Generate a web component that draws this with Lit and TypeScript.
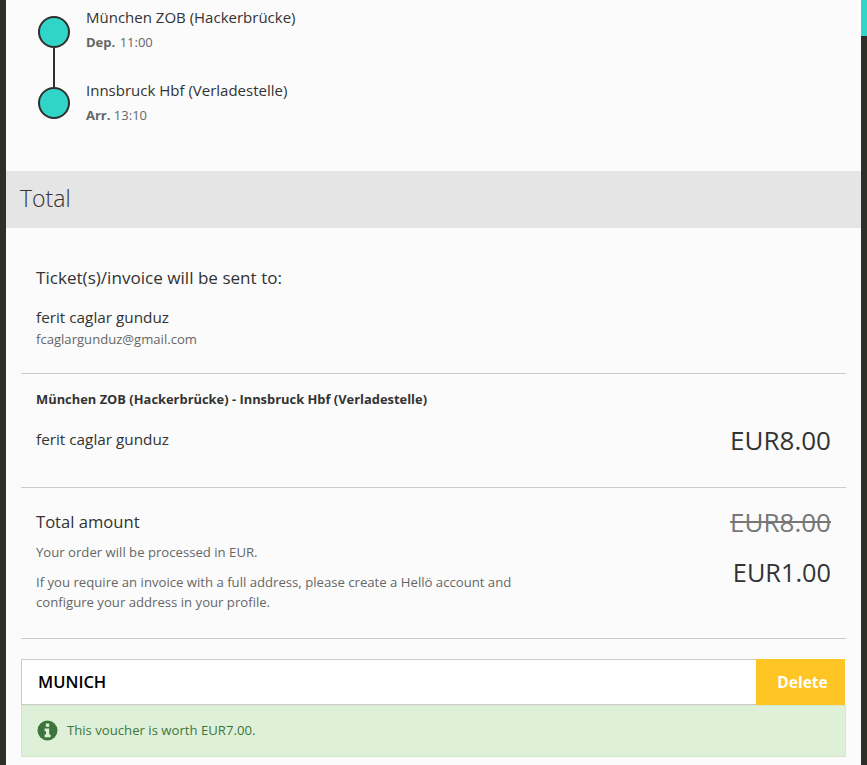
import { LitElement, html, css } from "lit";
import { customElement } from "lit/decorators.js";

@customElement("app-root")
export class AppRoot extends LitElement {
  static styles = css`
    :host {
      display: block;
      height: 765px;
      overflow: hidden;
      background: #2f2f2a;
      font-family: "Open Sans", "Noto Sans", sans-serif;
      color: #333;
    }
    .page {
      position: relative;
      height: 765px;
      margin: 0 6px;
      background: #fbfbfb;
      overflow: hidden;
    }
    .scroll {
      position: fixed;
      top: 0;
      right: 0;
      width: 6px;
      height: 36px;
      background: #30d5c8;
    }
    .route {
      height: 171px;
      box-sizing: border-box;
      padding: 4px 0 0 32px;
      display: flex;
      gap: 16px;
    }
    .line {
      display: flex;
      flex-direction: column;
      align-items: center;
      padding-top: 12px;
      width: 32px;
    }
    .dot {
      width: 32px;
      height: 32px;
      box-sizing: border-box;
      border: 2px solid #2f2f2f;
      border-radius: 50%;
      background: #30d5c8;
    }
    .bar {
      width: 2px;
      height: 39px;
      background: #2f2f2f;
    }
    .stop {
      height: 73px;
    }
    .name {
      font-size: 15px;
      line-height: 26px;
    }
    .time {
      font-size: 13px;
      line-height: 24px;
      color: #666;
    }
    .time b {
      font-weight: 700;
    }
    .time b.wide {
      margin-right: 1px;
    }
    .head {
      height: 57px;
      background: #e5e5e5;
      padding-left: 14px;
      font-size: 23px;
      line-height: 55px;
      font-weight: 300;
    }
    .body {
      padding: 0 15px;
    }
    .send {
      height: 146px;
      box-sizing: border-box;
      padding: 37px 15px 0;
      border-bottom: 1px solid #ccc;
    }
    .send h3 {
      margin: 0;
      font-size: 17.1px;
      font-weight: 400;
      line-height: 26px;
    }
    .send .who {
      font-size: 15.3px;
      line-height: 22px;
      margin-top: 15px;
    }
    .send .mail {
      font-size: 13.1px;
      line-height: 20px;
      margin-top: 1px;
      color: #666;
    }
    .ticket {
      height: 114px;
      box-sizing: border-box;
      padding: 15px 15px 0;
      border-bottom: 1px solid #ccc;
    }
    .ticket .title {
      font-size: 12.9px;
      font-weight: 700;
      line-height: 20px;
    }
    .row {
      display: flex;
      justify-content: space-between;
      align-items: flex-start;
    }
    .ticket .row {
      margin-top: 17px;
      font-size: 15.3px;
      line-height: 26px;
    }
    .ticket .price {
      margin-top: -3px;
    }
    .price {
      font-size: 26px;
      line-height: 34px;
    }
    .total {
      height: 151px;
      box-sizing: border-box;
      padding: 21px 15px 0;
      border-bottom: 1px solid #ccc;
    }
    .total .label {
      font-size: 16.6px;
      line-height: 26px;
    }
    .total p {
      margin: 7px 0 0;
      width: 490px;
      font-size: 13.15px;
      line-height: 20px;
      color: #666;
    }
    .total p + p {
      margin-top: 10px;
    }
    .amounts {
      text-align: right;
    }
    .old {
      color: #777;
      text-decoration: line-through;
      line-height: 30px;
      margin-top: -2px;
    }
    .new {
      font-size: 25.3px;
      margin-top: 18px;
    }
    .voucher {
      display: flex;
      margin-top: 20px;
      height: 46px;
      width: 824px;
    }
    .code {
      flex: 1;
      box-sizing: border-box;
      padding-left: 16px;
      background: #fff;
      border: 1px solid #ccc;
      border-right: none;
      color: #000;
      font-size: 16.5px;
      font-weight: 600;
      line-height: 44px;
    }
    .delete {
      width: 89px;
      border: none;
      padding: 0 0 0 4px;
      background: #ffc524;
      color: #fff;
      font-family: inherit;
      font-size: 15.5px;
      font-weight: 700;
    }
    .notice {
      display: flex;
      align-items: center;
      gap: 9px;
      height: 52px;
      box-sizing: border-box;
      padding: 0 0 2px 15px;
      background: #dff0d8;
      border: 1px solid #d6e9c6;
      color: #3c763d;
      font-size: 13.15px;
    }
    .notice svg {
      width: 21px;
      height: 21px;
      flex: none;
    }
  `;

  render() {
    return html`
      <div class="page">
        <div class="scroll"></div>
        <div class="route">
          <div class="line">
            <div class="dot"></div>
            <div class="bar"></div>
            <div class="dot"></div>
          </div>
          <div>
            <div class="stop">
              <div class="name">München ZOB (Hackerbrücke)</div>
              <div class="time"><b class="wide">Dep.</b> 11:00</div>
            </div>
            <div class="stop">
              <div class="name">Innsbruck Hbf (Verladestelle)</div>
              <div class="time"><b>Arr.</b> 13:10</div>
            </div>
          </div>
        </div>
        <div class="head">Total</div>
        <div class="body">
          <div class="send">
            <h3>Ticket(s)/invoice will be sent to:</h3>
            <div class="who">ferit caglar gunduz</div>
            <div class="mail">fcaglargunduz@gmail.com</div>
          </div>
          <div class="ticket">
            <div class="title">München ZOB (Hackerbrücke) - Innsbruck Hbf (Verladestelle)</div>
            <div class="row">
              <span>ferit caglar gunduz</span>
              <span class="price">EUR8.00</span>
            </div>
          </div>
          <div class="total">
            <div class="row">
              <div>
                <div class="label">Total amount</div>
                <p>Your order will be processed in EUR.</p>
                <p>If you require an invoice with a full address, please create a Hellö account and configure your address in your profile.</p>
              </div>
              <div class="amounts">
                <div class="price old">EUR8.00</div>
                <div class="price new">EUR1.00</div>
              </div>
            </div>
          </div>
          <div class="voucher">
            <div class="code">MUNICH</div>
            <button class="delete">Delete</button>
          </div>
          <div class="notice">
            <svg viewBox="0 0 21 21">
              <circle cx="10.5" cy="10.5" r="10" fill="#3c763d"></circle>
              <rect x="8.8" y="3.6" width="3.4" height="3.2" rx=".5" fill="#dff0d8"></rect>
              <path d="M7.6 8.6h4.6v6h1.4v2.6H7.6v-2.6h1.4v-3.4H7.6z" fill="#dff0d8"></path>
            </svg>
            <span>This voucher is worth EUR7.00.</span>
          </div>
        </div>
      </div>
    `;
  }
}
